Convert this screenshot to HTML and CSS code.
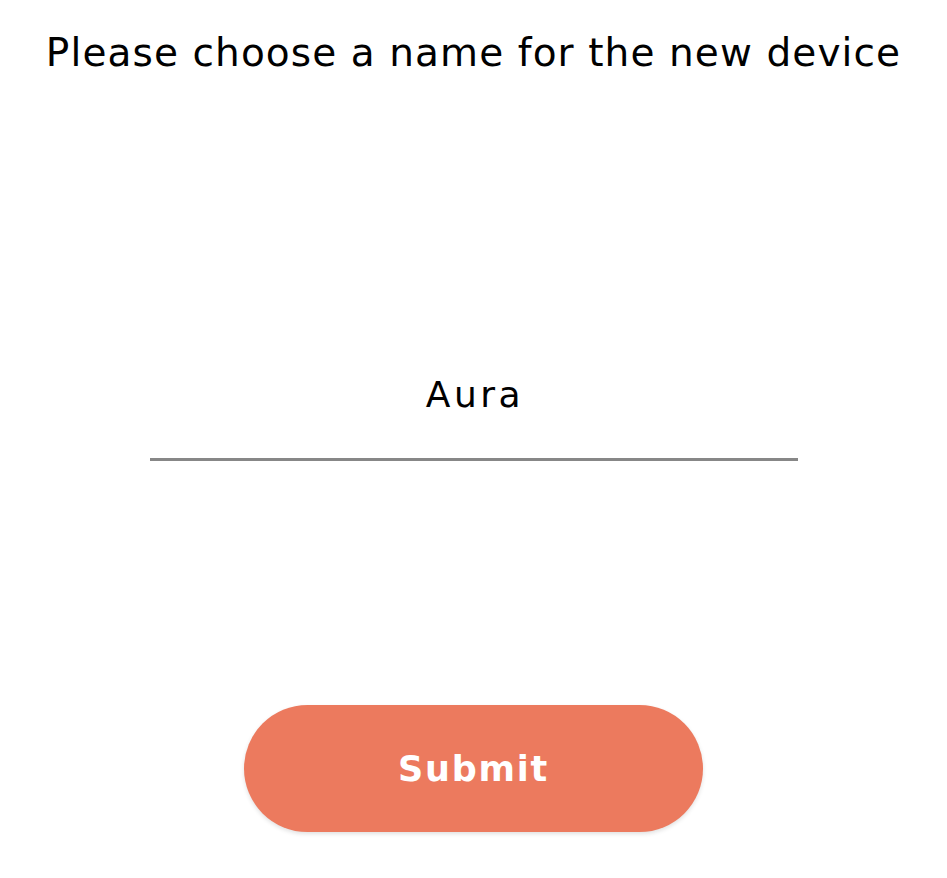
FILE: index.html
```html
<!DOCTYPE html>
<html lang="en">
<head>
<meta charset="utf-8">
<title>Name device</title>
<link rel="stylesheet" href="styles.css">
</head>
<body>
<main class="screen">
  <h1 class="title">Please choose a name for the new device</h1>
  <div class="field">
    <div class="field-value">Aura</div>
    <div class="field-line"></div>
  </div>
  <button class="submit" type="button">Submit</button>
</main>
</body>
</html>
```
FILE: styles.css
```css
html, body {
  margin: 0;
  padding: 0;
  background: #ffffff;
}
.screen {
  width: 947px;
  height: 878px;
  display: flex;
  flex-direction: column;
  align-items: center;
  font-family: "DejaVu Sans", "Open Sans", sans-serif;
  color: #000;
}
.title {
  margin: 30px 0 0 0;
  font-size: 39px;
  font-weight: 400;
  letter-spacing: 1.1px;
  line-height: 46px;
  white-space: nowrap;
  text-align: center;
}
.field {
  margin-top: 297px;
  width: 648px;
  display: flex;
  flex-direction: column;
  align-items: center;
}
.field-value {
  font-size: 36px;
  letter-spacing: 3.5px;
  padding-left: 3px;
  line-height: 44px;
}
.field-line {
  margin-top: 41px;
  width: 100%;
  height: 3px;
  background: #878787;
}
.submit {
  margin-top: 244px;
  width: 459px;
  height: 127px;
  border: none;
  border-radius: 64px;
  background: #ec7a5e;
  color: #ffffff;
  font-family: "DejaVu Sans", sans-serif;
  font-weight: 700;
  font-size: 35px;
  letter-spacing: 1.8px;
  box-shadow: 0 2px 4px rgba(0,0,0,0.12);
}
```
